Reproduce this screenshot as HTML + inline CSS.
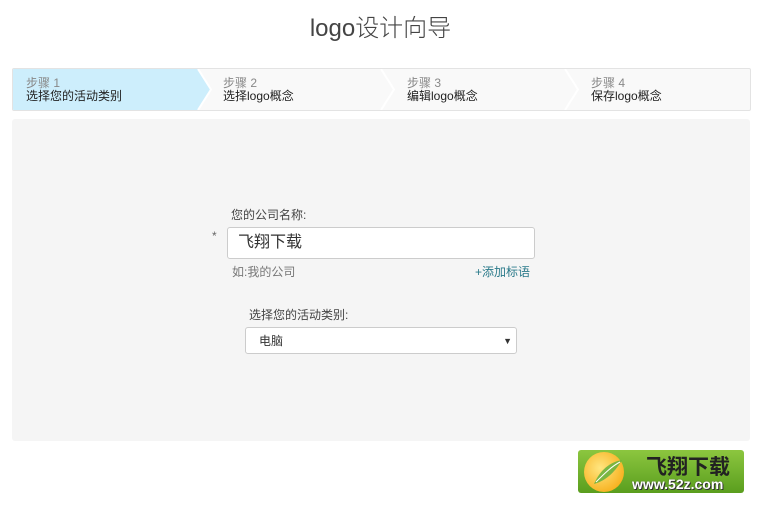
<!DOCTYPE html>
<html><head><meta charset="utf-8">
<style>
body{margin:0;width:761px;height:505px;background:#fff;font-family:"Liberation Sans","Noto Sans CJK SC",sans-serif;position:relative;overflow:hidden}
.t{position:absolute;left:0;width:761px;top:8px;text-align:center;font-size:24px;color:#444;font-weight:300}
.steps{position:absolute;left:12px;top:68px;width:737px;height:41px;border:1px solid #e3e3e3;border-radius:2px;background:#f9f9f9;overflow:hidden}
.act{position:absolute;left:0;top:0;height:41px;width:198px;background:#cdeefc;clip-path:polygon(0 0,185px 0,198px 20.5px,185px 41px,0 41px)}
.s{position:absolute;top:8px;font-size:12px;line-height:13px}
.s .a{color:#888}.s .b{color:#222}
.sep{position:absolute;top:0;height:41px}
.panel{position:absolute;left:12px;top:119px;width:738px;height:322px;background:#f5f5f5;border-radius:3px}
.lab{position:absolute;font-size:12px;color:#444}
.inp{position:absolute;left:227px;top:227px;width:306px;height:30px;background:#fff;border:1px solid #ccc;border-radius:3px;font-size:16px;color:#333;line-height:30px}
.sel{position:absolute;left:245px;top:327px;width:270px;height:25px;background:#fff;border:1px solid #ccc;border-radius:3px;font-size:12px;color:#333;line-height:26px}
</style></head><body>
<div class="t">logo设计向导</div>
<div class="steps">
<div class="act"></div>
<svg class="sep" style="left:183px" width="18" height="41"><polyline points="2,0 15,20.5 2,41" fill="none" stroke="#fff" stroke-width="2"/></svg>
<svg class="sep" style="left:366px" width="18" height="41"><polyline points="2,0 15,20.5 2,41" fill="none" stroke="#fff" stroke-width="2"/></svg>
<svg class="sep" style="left:550px" width="18" height="41"><polyline points="2,0 15,20.5 2,41" fill="none" stroke="#fff" stroke-width="2"/></svg>
<div class="s" style="left:13px"><div class="a">步骤 1</div><div class="b">选择您的活动类别</div></div>
<div class="s" style="left:210px"><div class="a">步骤 2</div><div class="b">选择logo概念</div></div>
<div class="s" style="left:394px"><div class="a">步骤 3</div><div class="b">编辑logo概念</div></div>
<div class="s" style="left:578px"><div class="a">步骤 4</div><div class="b">保存logo概念</div></div>
</div>
<div class="panel"></div>
<div class="lab" style="left:231px;top:206px">您的公司名称:</div>
<div class="lab" style="left:212px;top:229px;color:#666">*</div>
<div class="inp"><span style="margin-left:10px">飞翔下载</span></div>
<div class="lab" style="left:232px;top:263px;color:#777">如:我的公司</div>
<div class="lab" style="left:475px;top:263px;color:#2a7a8a">+添加标语</div>
<div class="lab" style="left:249px;top:306px">选择您的活动类别:</div>
<div class="sel"><span style="margin-left:13px">电脑</span><span style="position:absolute;right:4px;top:0;font-size:9px;color:#333">▼</span></div>
<div style="position:absolute;left:578px;top:450px;width:166px;height:43px;background:linear-gradient(#8cc63f,#5a9e1e);border-radius:3px;overflow:hidden">
<div style="position:absolute;left:6px;top:2px;width:40px;height:40px;border-radius:50%;background:radial-gradient(circle at 40% 40%,#ffe680,#f5a000)"></div>
<svg style="position:absolute;left:12px;top:6px" width="34" height="32"><path d="M4 28 C10 14 20 6 32 4 C26 14 18 24 4 28Z" fill="#6db33f" opacity=".9"/><path d="M6 26 C14 18 22 10 30 6" stroke="#fff" fill="none"/></svg>
<div style="position:absolute;left:68px;top:1px;font-size:21px;font-weight:bold;color:#222;letter-spacing:0">飞翔下载</div>
<div style="position:absolute;left:54px;top:26px;font-size:14px;font-weight:bold;color:#fff;font-family:'Liberation Sans',sans-serif;text-shadow:0 0 1px #333,1px 1px 0 #333">www.52z.com</div>
</div>
</body></html>
